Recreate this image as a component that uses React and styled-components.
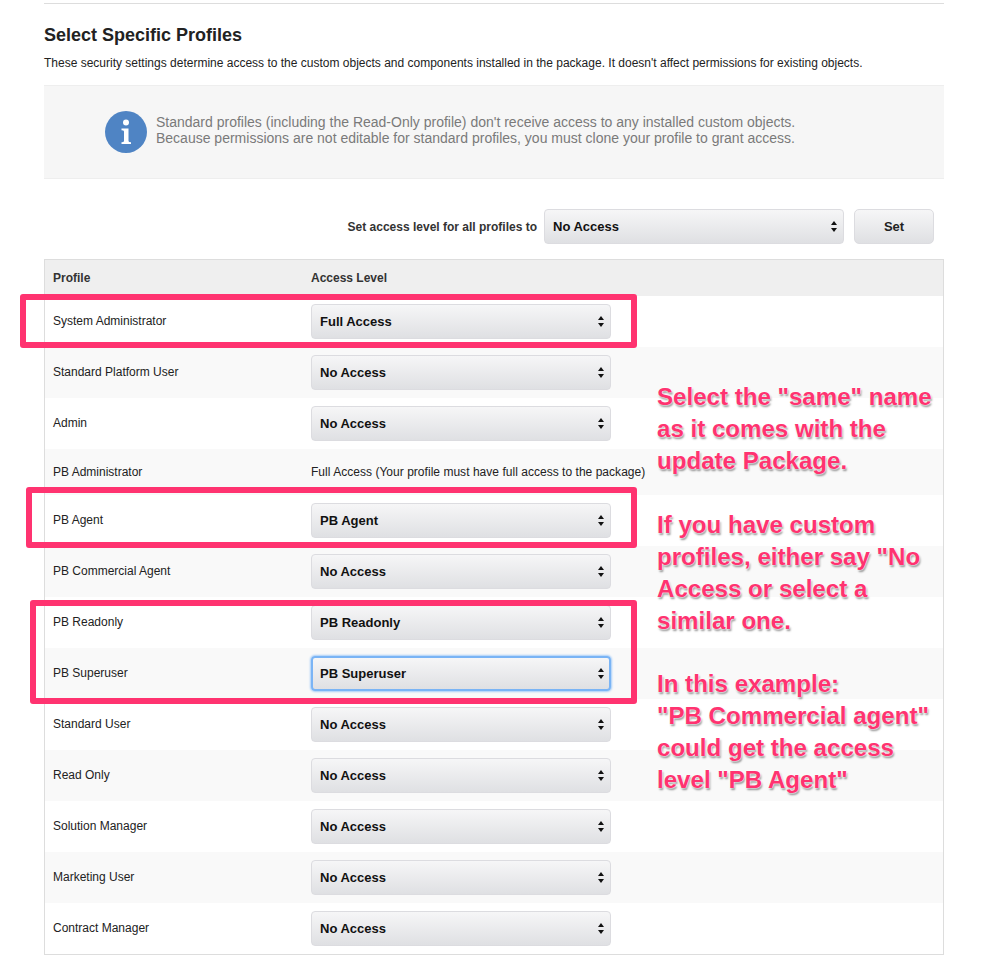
import styled, { createGlobalStyle } from 'styled-components';

const PINK = '#ff3370';

const profiles = [
  { name: 'System Administrator', level: 'Full Access' },
  { name: 'Standard Platform User', level: 'No Access' },
  { name: 'Admin', level: 'No Access' },
  { name: 'PB Administrator', fixed: 'Full Access (Your profile must have full access to the package)' },
  { name: 'PB Agent', level: 'PB Agent' },
  { name: 'PB Commercial Agent', level: 'No Access' },
  { name: 'PB Readonly', level: 'PB Readonly' },
  { name: 'PB Superuser', level: 'PB Superuser', focused: true },
  { name: 'Standard User', level: 'No Access' },
  { name: 'Read Only', level: 'No Access' },
  { name: 'Solution Manager', level: 'No Access' },
  { name: 'Marketing User', level: 'No Access' },
  { name: 'Contract Manager', level: 'No Access' },
];

function Arrows() {
  return (
    <svg width="6" height="11" viewBox="0 0 6 11">
      <path d="M3 0 L6 4 H0 Z M3 11 L0 7 H6 Z" fill="#111" />
    </svg>
  );
}

function Select({ value, width, focused }) {
  return (
    <SelectBox $width={width} $focused={focused}>
      <span>{value}</span>
      <Arrows />
    </SelectBox>
  );
}

function InfoIcon() {
  return (
    <svg width="42" height="42" viewBox="0 0 42 42">
      <circle cx="21" cy="21" r="21" fill="#4f84c4" />
      <circle cx="21" cy="11.5" r="3" fill="#fff" />
      <path d="M16.5 17.5 H23.5 V30 Q23.5 31.3 26 31.3 V33 H16.5 V31.3 Q19 31.3 19 30 V20.5 Q19 19.2 16.5 19.2 Z" fill="#fff" />
    </svg>
  );
}

export default function App() {
  return (
    <Page>
      <GlobalStyle />
      <Rule />
      <Title>Select Specific Profiles</Title>
      <Description>
        These security settings determine access to the custom objects and components installed in the package. It doesn't affect permissions for existing objects.
      </Description>
      <InfoBox>
        <InfoIcon />
        <InfoText>
          Standard profiles (including the Read-Only profile) don't receive access to any installed custom objects.
          <br />
          Because permissions are not editable for standard profiles, you must clone your profile to grant access.
        </InfoText>
      </InfoBox>
      <SetAllRow>
        <SetAllLabel>Set access level for all profiles to</SetAllLabel>
        <Select value="No Access" width={300} />
        <SetButton>Set</SetButton>
      </SetAllRow>
      <Table>
        <HeadRow>
          <HeadName>Profile</HeadName>
          <div>Access Level</div>
        </HeadRow>
        {profiles.map((p, i) => (
          <Row key={p.name} $alt={i % 2 === 1} $short={!!p.fixed}>
            <NameCell $short={!!p.fixed}>{p.name}</NameCell>
            {p.fixed ? <FixedLevel>{p.fixed}</FixedLevel> : <Select value={p.level} width={300} focused={p.focused} />}
          </Row>
        ))}
      </Table>

      <Highlight $left={20} $top={294} $width={617} $height={54} />
      <Highlight $left={26} $top={487} $width={611} $height={61} />
      <Highlight $left={30} $top={600} $width={607} $height={104} />

      <Note $top={381}>
        Select the "same" name<br />as it comes with the<br />update Package.
      </Note>
      <Note $top={509}>
        If you have custom<br />profiles, either say "No<br />Access or select a<br />similar one.
      </Note>
      <Note $top={668}>
        In this example:<br />"PB Commercial agent"<br />could get the access<br />level "PB Agent"
      </Note>
    </Page>
  );
}

const GlobalStyle = createGlobalStyle`
  html, body {
    margin: 0;
    background: #fff;
  }
  * {
    box-sizing: border-box;
  }
`;

const Page = styled.div`
  position: relative;
  width: 984px;
  height: 969px;
  padding: 3px 40px 0 44px;
  font-family: "Liberation Sans", Arial, sans-serif;
  color: #222;
  overflow: hidden;
`;

const Rule = styled.div`
  height: 1px;
  background: #ddd;
`;

const Title = styled.h2`
  margin: 21px 0 0;
  font-size: 18px;
  line-height: 20px;
  font-weight: 700;
`;

const Description = styled.p`
  margin: 11px 0 0;
  font-size: 12px;
  line-height: 14px;
  color: #222;
`;

const InfoBox = styled.div`
  display: flex;
  align-items: center;
  gap: 9px;
  height: 94px;
  margin-top: 15px;
  padding-left: 61px;
  background: #f6f6f6;
  border-top: 1px solid #eee;
  border-bottom: 1px solid #eee;
`;

const InfoText = styled.div`
  margin-bottom: 4px;
  font-size: 14px;
  line-height: 16px;
  color: #7a7a7a;
`;

const SetAllRow = styled.div`
  display: flex;
  justify-content: flex-end;
  align-items: center;
  height: 35px;
  margin-top: 30px;
  padding-right: 10px;
`;

const SetAllLabel = styled.span`
  margin-right: 7px;
  font-size: 12px;
  font-weight: 700;
  color: #333;
`;

const SelectBox = styled.div`
  display: flex;
  align-items: center;
  justify-content: space-between;
  width: ${(p) => p.$width}px;
  height: 35px;
  padding: ${(p) => (p.$focused ? '0 5px 0 7px' : '0 6px 0 8px')};
  border: ${(p) => (p.$focused ? '2px solid #7ab4f5' : '1px solid #dcdce0')};
  border-radius: 4px;
  background: linear-gradient(#f6f6f7, #dfe0e3);
  box-shadow: ${(p) => (p.$focused ? '0 0 2px 1px #a6cdf8' : 'none')};
  font-size: 13px;
  font-weight: 700;
  color: #111;
`;

const SetButton = styled.div`
  display: flex;
  align-items: center;
  justify-content: center;
  width: 80px;
  height: 35px;
  margin-left: 10px;
  border: 1px solid #dcdce0;
  border-radius: 5px;
  background: linear-gradient(#f6f6f7, #dfe0e3);
  font-size: 13px;
  font-weight: 700;
  color: #222;
`;

const Table = styled.div`
  margin-top: 15px;
  border: 1px solid #ddd;
  font-size: 12px;
`;

const HeadRow = styled.div`
  display: grid;
  grid-template-columns: 266px 1fr;
  align-items: center;
  height: 36px;
  background: #efefef;
  font-weight: 700;
  color: #333;
`;

const Row = styled.div`
  display: grid;
  grid-template-columns: 266px 1fr;
  align-items: center;
  height: ${(p) => (p.$short ? 46 : 51)}px;
  background: ${(p) => (p.$alt ? '#f9f9f9' : '#fff')};
`;

const HeadName = styled.div`
  padding-left: 8px;
`;

const NameCell = styled.div`
  padding-left: 8px;
  padding-bottom: ${(p) => (p.$short ? 0 : 2)}px;
`;

const FixedLevel = styled.div`
  white-space: nowrap;
  letter-spacing: 0.03px;
`;

const Highlight = styled.div`
  position: absolute;
  left: ${(p) => p.$left}px;
  top: ${(p) => p.$top}px;
  width: ${(p) => p.$width}px;
  height: ${(p) => p.$height}px;
  border: 6px solid ${PINK};
  border-radius: 3px;
`;

const Note = styled.div`
  position: absolute;
  left: 657px;
  top: ${(p) => p.$top}px;
  font-size: 24.1px;
  line-height: 32px;
  font-weight: 700;
  white-space: nowrap;
  color: ${PINK};
  text-shadow: 0 0 2px #fff, 0 0 2px #fff, 1px 2px 2px rgba(0, 0, 0, 0.45);
`;
